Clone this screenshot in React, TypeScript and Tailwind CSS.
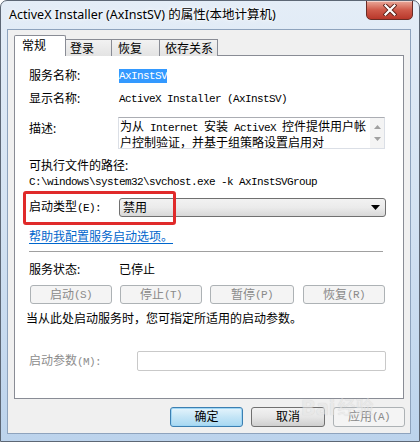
import React from "react";

const M = ({ children, className = "" }: { children: React.ReactNode; className?: string }) => (
  <span className={"font-['Liberation_Mono',monospace] text-[11px] tracking-[-0.6px] " + className}>{children}</span>
);

const Btn = ({
  children,
  w,
  ml = 0,
  disabled = false,
  primary = false,
  h = 19,
}: {
  children: React.ReactNode;
  w: number;
  ml?: number;
  disabled?: boolean;
  primary?: boolean;
  h?: number;
}) => {
  let cls = "flex items-center justify-center rounded-[3px] border leading-[16px] text-[12px] ";
  if (disabled) cls += "border-[#adb2b5] bg-[#f4f4f4] text-[#8a8a8a]";
  else if (primary)
    cls += "border-[#3c7fb1] bg-gradient-to-b from-[#e5f4fc] via-[#c4e5f6] to-[#a8d8f2] text-black shadow-[inset_0_0_0_1px_#9fd6f5]";
  else cls += "border-[#707070] bg-gradient-to-b from-[#f2f2f2] via-[#e6e6e6] to-[#cfcfcf] text-black";
  return (
    <div className={cls} style={{ width: w, height: h, marginLeft: ml }}>
      {children}
    </div>
  );
};

export default function App() {
  return (
    <div className="relative w-[420px] h-[442px] overflow-hidden border border-[#5d6775] rounded-t-[7px] bg-gradient-to-b from-[#e4edf7] via-[#d3e2f2] to-[#bcd3ec] font-['Noto_Sans','Noto_Sans_CJK_SC',sans-serif] text-black flex flex-col">
      {/* title bar */}
      <div className="h-[28px] flex items-start justify-between">
        <div className="pl-[8px] pt-[5px] text-[12.5px] leading-[17px] text-black [text-shadow:0_0_6px_#ffffff,0_0_3px_#ffffff]">
          ActiveX Installer (AxInstSV) 的属性(本地计算机)
        </div>
        <div className="mr-[6px] -mt-px w-[47px] h-[20px] rounded-b-[5px] border border-[#6a2c25] bg-gradient-to-b from-[#e9a99b] via-[#cf5a4a] to-[#b8372a] shadow-[inset_0_1px_0_rgba(255,255,255,0.5)] flex items-center justify-center">
          <svg width="14" height="12" viewBox="0 0 14 12">
            <path d="M2.5 1.5 L11.5 10.5 M11.5 1.5 L2.5 10.5" stroke="#5a2019" strokeWidth="4" strokeLinecap="square" />
            <path d="M2.5 1.5 L11.5 10.5 M11.5 1.5 L2.5 10.5" stroke="#ffffff" strokeWidth="2.2" strokeLinecap="square" />
          </svg>
        </div>
      </div>

      {/* client area */}
      <div className="ml-[6px] w-[404px] h-[405px] border border-[#8ea3bd] bg-[#f0f0f0] flex flex-col text-[12px] leading-[16px]">
        {/* tabs */}
        <div className="mt-[5px] ml-[6px] h-[21px] flex items-end relative z-10">
          <div className="w-[52px] h-[21px] border border-b-0 border-[#898c95] bg-white pl-[7px] pt-[2px] rounded-t-[2px]">常规</div>
          <div className="w-[46px] h-[17px] border border-b-0 border-l-0 border-[#898c95] bg-gradient-to-b from-[#f2f2f2] to-[#e3e3e3] pl-[4px] pt-[1px]">登录</div>
          <div className="w-[48px] h-[17px] border border-b-0 border-l-0 border-[#898c95] bg-gradient-to-b from-[#f2f2f2] to-[#e3e3e3] pl-[6px] pt-[1px]">恢复</div>
          <div className="w-[58px] h-[17px] border border-b-0 border-l-0 border-[#898c95] bg-gradient-to-b from-[#f2f2f2] to-[#e3e3e3] pl-[5px] pt-[1px]">依存关系</div>
        </div>

        {/* panel */}
        <div className="ml-[6px] -mt-px w-[390px] h-[344px] border border-[#898c95] bg-white flex flex-col">
          {/* row 1 */}
          <div className="mt-[12px] h-[16px] flex items-center">
            <div className="pl-[14px] w-[104px]">服务名称:</div>
            <div className="h-[14px] bg-[#3399ff] text-white flex items-center">
              <M>AxInstSV</M>
            </div>
          </div>
          {/* row 2 */}
          <div className="mt-[7px] h-[16px] flex items-center">
            <div className="pl-[14px] w-[104px]">显示名称:</div>
            <M>ActiveX Installer (AxInstSV)</M>
          </div>
          {/* row 3 description */}
          <div className="mt-[10px] flex items-start">
            <div className="pl-[14px] w-[103px] mt-[4px]">描述:</div>
            <div className="w-[267px] h-[32px] border border-[#dbdfe6] border-t-[#abadb3] flex">
              <div className="flex-1 pl-[1px] pt-px text-[12px] leading-[13px] font-['Noto_Sans_CJK_SC',sans-serif]">
                <div className="whitespace-nowrap">
                  为从<M> Internet </M>安装<M> ActiveX </M>控件提供用户帐
                </div>
                <div className="whitespace-nowrap">户控制验证，并基于组策略设置启用对</div>
              </div>
              <div className="w-[14px] h-full bg-[#f4f4f4] flex flex-col items-center justify-center gap-[8px]">
                <svg width="7" height="4" viewBox="0 0 7 4">
                  <path d="M0 4 L3.5 0 L7 4 Z" fill="#a0a0a0" />
                </svg>
                <svg width="7" height="4" viewBox="0 0 7 4">
                  <path d="M0 0 L3.5 4 L7 0 Z" fill="#a0a0a0" />
                </svg>
              </div>
            </div>
          </div>
          {/* row 4 */}
          <div className="mt-[9px] h-[16px] pl-[14px] flex items-center">可执行文件的路径:</div>
          <div className="h-[16px] pl-[14px] flex items-center">
            <M>C:\windows\system32\svchost.exe -k AxInstSVGroup</M>
          </div>
          {/* row 6 startup type */}
          <div className="mt-[8px] h-[19px] flex items-center relative">
            <div className="pl-[14px] w-[104px]">
              启动类型<M>(E):</M>
            </div>
            <div className="w-[267px] h-[19px] rounded-[3px] border border-[#707070] bg-gradient-to-b from-[#f2f2f2] via-[#ebebeb] to-[#d8d8d8] flex items-center justify-between pl-[3px] pr-[5px]">
              <span>禁用</span>
              <svg width="9" height="5" viewBox="0 0 9 5">
                <path d="M0 0 L9 0 L4.5 5 Z" fill="#000" />
              </svg>
            </div>
            <div className="absolute left-[8px] top-[-7px] w-[153px] h-[34px] border-[3px] border-[#e02a2a] rounded-[3px]" />
          </div>
          {/* link */}
          <div className="mt-[12px] h-[16px] pl-[14px] flex items-center">
            <span className="text-[#0066cc] underline underline-offset-2">帮助我配置服务启动选项。</span>
          </div>
          {/* separator */}
          <div className="mt-[6px] ml-[14px] w-[354px] h-px bg-[#a0a0a0]" />
          {/* status */}
          <div className="mt-[10px] h-[16px] flex items-center">
            <div className="pl-[14px] w-[104px]">服务状态:</div>
            <div>已停止</div>
          </div>
          {/* buttons */}
          <div className="mt-[7px] flex">
            <Btn w={82} ml={15} disabled>
              启动<M>(S)</M>
            </Btn>
            <Btn w={82} ml={8} disabled>
              停止<M>(T)</M>
            </Btn>
            <Btn w={84} ml={8} disabled>
              暂停<M>(P)</M>
            </Btn>
            <Btn w={82} ml={9} disabled>
              恢复<M>(R)</M>
            </Btn>
          </div>
          <div className="mt-[7px] h-[16px] pl-[11px] flex items-center">当从此处启动服务时，您可指定所适用的启动参数。</div>
          {/* params */}
          <div className="mt-[24px] h-[20px] flex items-center">
            <div className="pl-[14px] w-[122px] text-[#8d8d8d]">
              启动参数<M>(M):</M>
            </div>
            <div className="w-[249px] h-[20px] border border-[#c9c9c9] rounded-[2px] bg-white" />
          </div>
        </div>

        {/* bottom buttons */}
        <div className="mt-[8px] flex justify-end pr-[5px] gap-[8px]">
          <Btn w={73} h={20} primary>
            确定
          </Btn>
          <Btn w={74} h={20}>
            取消
          </Btn>
          <Btn w={72} h={20} disabled>
            应用<M>(A)</M>
          </Btn>
        </div>
      </div>

      {/* watermark */}
      <div className="absolute left-[300px] top-[393px] flex items-end gap-[2px] opacity-60 pointer-events-none">
        <span className="text-[22px] leading-[24px] font-bold text-[#e6e6e6] [text-shadow:0_0_1px_#bdbdbd]">Bai</span>
        <span className="text-[18px] leading-[22px] text-[#e6e6e6] [text-shadow:0_0_1px_#bdbdbd]">经验</span>
      </div>
    </div>
  );
}
